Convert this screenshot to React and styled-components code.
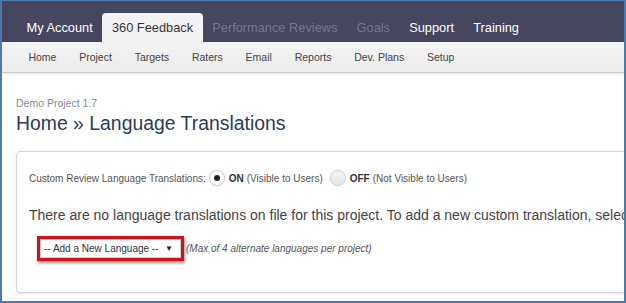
import React from "react";
import styled, { createGlobalStyle } from "styled-components";

const Global = createGlobalStyle`
  html, body { margin: 0; padding: 0; background: #fff; }
  body { font-family: "Liberation Sans", Arial, sans-serif; }
  * { box-sizing: border-box; }
`;

const Frame = styled.div`
  width: 626px;
  height: 303px;
  border: 2px solid #4f78ad;
  border-top-width: 1px;
  overflow: hidden;
  display: flex;
  flex-direction: column;
  background: #fff;
`;

const TopNav = styled.nav`
  height: 41px;
  background: #46465e;
  display: flex;
  align-items: flex-end;
  padding-left: 15px;
  flex-shrink: 0;
`;

const TopItem = styled.div`
  height: 29px;
  padding: 0 9.6px;
  display: flex;
  align-items: center;
  font-size: 12.8px;
  white-space: nowrap;
  color: ${(p) => (p.$active ? "#333" : p.$muted ? "#777795" : "#ffffff")};
  background: ${(p) => (p.$active ? "#f3f3f3" : "transparent")};
  border-radius: ${(p) => (p.$active ? "4px 4px 0 0" : "0")};
`;

const SubNav = styled.nav`
  height: 31px;
  background: linear-gradient(#f4f4f4, #ececec);
  border-bottom: 1px solid #cfcfcf;
  box-shadow: 0 1px 2px rgba(0, 0, 0, 0.12);
  display: flex;
  align-items: center;
  padding-left: 15px;
  flex-shrink: 0;
`;

const SubItem = styled.div`
  padding: 0 11.4px;
  font-size: 10.5px;
  color: #444;
  white-space: nowrap;
`;

const Content = styled.div`
  padding: 23px 0 0 14px;
  display: flex;
  flex-direction: column;
`;

const Crumb = styled.div`
  font-size: 10.5px;
  color: #8a8a8a;
  line-height: 14px;
`;

const Title = styled.h1`
  margin: 1px 0 0;
  font-size: 19.4px;
  font-weight: normal;
  color: #2b3c58;
  line-height: 24px;
`;

const Panel = styled.div`
  margin-top: 16px;
  width: 720px;
  height: 142px;
  border: 1px solid #d6d6d6;
  border-radius: 4px;
  box-shadow: 0 1px 2px rgba(0, 0, 0, 0.1);
  padding: 18px 0 0 12px;
  display: flex;
  flex-direction: column;
`;

const ToggleRow = styled.div`
  display: flex;
  align-items: center;
  font-size: 10px;
  color: #555;
  white-space: nowrap;
`;

const Radio = styled.span`
  width: 16px;
  height: 16px;
  border-radius: 50%;
  border: 1px solid #d2d2d2;
  background: ${(p) => (p.$on ? "#fff" : "linear-gradient(#f4f4f4, #e6e6e6)")};
  box-shadow: 0 0 2px rgba(0, 0, 0, 0.15);
  display: inline-flex;
  align-items: center;
  justify-content: center;
  margin: 0 4px 0 ${(p) => p.$gap}px;
  &::after {
    content: "";
    display: ${(p) => (p.$on ? "block" : "none")};
    width: 6px;
    height: 6px;
    border-radius: 50%;
    background: #222;
  }
`;

const Strong = styled.b`
  color: #333;
  margin-right: 3px;
`;

const Message = styled.div`
  margin-top: 21px;
  font-size: 14px;
  color: #444;
  white-space: nowrap;
`;

const SelectRow = styled.div`
  margin-top: 13px;
  margin-left: 8px;
  display: flex;
  align-items: center;
`;

const Highlight = styled.div`
  border: 3px solid #d0101b;
  box-shadow: 1px 2px 3px rgba(0, 0, 0, 0.45);
`;

const Select = styled.div`
  width: 141px;
  height: 19px;
  border: 1px solid #cfcfcf;
  background: #fff;
  display: flex;
  align-items: center;
  justify-content: space-between;
  padding: 0 7px 0 3px;
  font-size: 10px;
  color: #333;
  white-space: nowrap;
`;

const Arrow = styled.span`
  font-size: 8px;
  color: #222;
`;

const Note = styled.span`
  margin-left: 2px;
  font-size: 10px;
  font-style: italic;
  color: #555;
  white-space: nowrap;
`;

export default function App() {
  const top = [
    { t: "My Account" },
    { t: "360 Feedback", active: true },
    { t: "Performance Reviews", muted: true },
    { t: "Goals", muted: true },
    { t: "Support" },
    { t: "Training" },
  ];
  const sub = ["Home", "Project", "Targets", "Raters", "Email", "Reports", "Dev. Plans", "Setup"];
  return (
    <>
      <Global />
      <Frame>
        <TopNav>
          {top.map((i) => (
            <TopItem key={i.t} $active={i.active} $muted={i.muted}>
              {i.t}
            </TopItem>
          ))}
        </TopNav>
        <SubNav>
          {sub.map((s) => (
            <SubItem key={s}>{s}</SubItem>
          ))}
        </SubNav>
        <Content>
          <Crumb>Demo Project 1.7</Crumb>
          <Title>Home » Language Translations</Title>
          <Panel>
            <ToggleRow>
              Custom Review Language Translations:
              <Radio $on $gap={3} />
              <Strong>ON</Strong> (Visible to Users)
              <Radio $gap={7} />
              <Strong>OFF</Strong> (Not Visible to Users)
            </ToggleRow>
            <Message>
              There are no language translations on file for this project. To add a new custom translation, select a language below.
            </Message>
            <SelectRow>
              <Highlight>
                <Select>
                  <span>-- Add a New Language --</span>
                  <Arrow>▼</Arrow>
                </Select>
              </Highlight>
              <Note>(Max of 4 alternate languages per project)</Note>
            </SelectRow>
          </Panel>
        </Content>
      </Frame>
    </>
  );
}
